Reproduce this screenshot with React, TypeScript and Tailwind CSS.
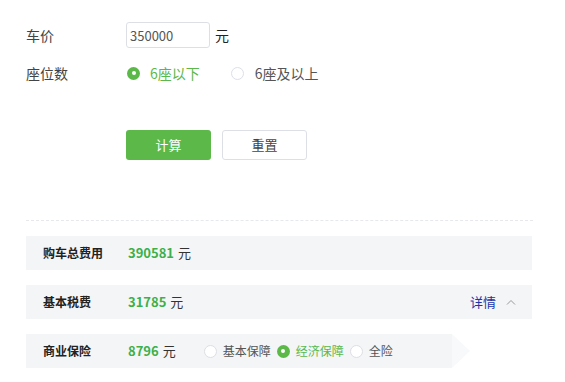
import { useState } from 'react';

const font = { fontFamily: '"Noto Sans CJK SC", "Liberation Sans", sans-serif' };

function Radio({ checked }: { checked: boolean }) {
  return checked ? (
    <span className="w-[13px] h-[13px] rounded-full bg-[#5cb849] flex items-center justify-center shrink-0">
      <span className="w-[4px] h-[4px] rounded-full bg-white" />
    </span>
  ) : (
    <span className="w-[13px] h-[13px] rounded-full border border-[#dcdfe6] bg-white shrink-0" />
  );
}

export default function App() {
  const [seat, setSeat] = useState(0);
  const [plan, setPlan] = useState(1);
  const plans = ['基本保障', '经济保障', '全险'];

  return (
    <div className="w-[565px] h-[382px] bg-white text-[#333] overflow-hidden" style={font}>
      <div className="pl-[26px] pt-[22px]">
        {/* 车价 */}
        <div className="flex items-center h-[26px]">
          <span className="w-[100px] text-[14px] text-[#444]">车价</span>
          <input
            defaultValue="350000"
            className="w-[84px] h-[26px] border border-[#dcdfe6] rounded-[3px] px-[3px] text-[13px] text-[#555] outline-none"
          />
          <span className="ml-[5px] text-[14px] text-[#222]">元</span>
        </div>

        {/* 座位数 */}
        <div className="flex items-center h-[24px] mt-[13px]">
          <span className="w-[101px] text-[14px] text-[#444]">座位数</span>
          <button className="flex items-center gap-[10px]" onClick={() => setSeat(0)}>
            <Radio checked={seat === 0} />
            <span className={`text-[14px] ${seat === 0 ? 'text-[#5cb849]' : 'text-[#555]'}`}>6座以下</span>
          </button>
          <button className="flex items-center gap-[11px] ml-[31px]" onClick={() => setSeat(1)}>
            <Radio checked={seat === 1} />
            <span className={`text-[14px] ${seat === 1 ? 'text-[#5cb849]' : 'text-[#555]'}`}>6座及以上</span>
          </button>
        </div>

        {/* buttons */}
        <div className="flex gap-[11px] ml-[100px] mt-[45px]">
          <button className="w-[85px] h-[30px] rounded-[3px] bg-[#5cb849] text-white text-[13px]">计算</button>
          <button className="w-[85px] h-[30px] rounded-[3px] border border-[#dcdfe6] bg-white text-[#444] text-[13px]">重置</button>
        </div>
      </div>

      <div className="mx-[26px] w-[507px] mt-[60px] border-t border-dashed border-[#e6e8eb]" />

      <div className="pl-[26px] mt-[15px] flex flex-col gap-[15px]">
        <div className="w-[506px] h-[34px] bg-[#f4f5f7] flex items-center pl-[17px]">
          <span className="w-[85px] text-[12px] font-bold text-[#222]">购车总费用</span>
          <span className="text-[13px] font-bold text-[#3cb04a]">390581</span>
          <span className="ml-[4px] text-[13px] text-[#333]">元</span>
        </div>

        <div className="w-[506px] h-[34px] bg-[#f4f5f7] flex items-center pl-[17px] pr-[16px]">
          <span className="w-[85px] text-[12px] font-bold text-[#222]">基本税费</span>
          <span className="text-[13px] font-bold text-[#3cb04a]">31785</span>
          <span className="ml-[4px] text-[13px] text-[#333]">元</span>
          <span className="ml-auto text-[13px] text-[#2233aa]">详情</span>
          <svg className="ml-[10px]" width="10" height="6" viewBox="0 0 10 6" fill="none">
            <path d="M1 5.5 L5 1.5 L9 5.5" stroke="#999" strokeWidth="1" />
          </svg>
        </div>

        <div className="flex items-center h-[34px]">
          <div className="w-[426px] h-[34px] bg-[#f4f5f7] flex items-center pl-[17px]">
            <span className="w-[85px] text-[12px] font-bold text-[#222]">商业保险</span>
            <span className="text-[13px] font-bold text-[#3cb04a]">8796</span>
            <span className="ml-[4px] text-[13px] text-[#333]">元</span>
            <div className="flex items-center ml-[28px] gap-[6px]">
              {plans.map((p, i) => (
                <button key={p} className="flex items-center gap-[6px]" onClick={() => setPlan(i)}>
                  <Radio checked={plan === i} />
                  <span className={`text-[12px] ${plan === i ? 'text-[#5cb849]' : 'text-[#555]'}`}>{p}</span>
                </button>
              ))}
            </div>
          </div>
          <div className="w-0 h-0 border-y-[17px] border-y-transparent border-l-[18px] border-l-[#f8f9fa]" />
        </div>
      </div>
    </div>
  );
}
